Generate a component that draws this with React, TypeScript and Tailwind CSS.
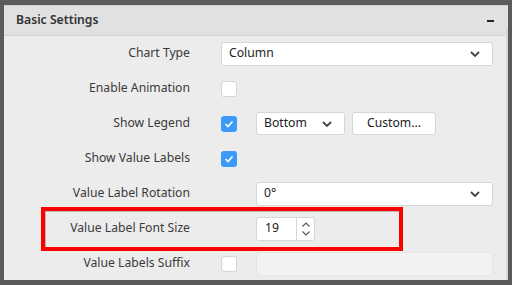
import React from "react";

const font = { fontFamily: '"Noto Sans", "Open Sans", sans-serif' };

function Chevron() {
  return (
    <svg width="10" height="6" viewBox="0 0 10 6" className="shrink-0">
      <polyline points="1,1 5,5 9,1" fill="none" stroke="#444" strokeWidth="1.8" />
    </svg>
  );
}

function Checkbox({ checked }: { checked?: boolean }) {
  if (checked) {
    return (
      <div className="flex h-4 w-4 shrink-0 items-center justify-center rounded-[3px] bg-[#3c9af8]">
        <svg width="10" height="8" viewBox="0 0 10 8">
          <polyline points="1.5,4 4,6.5 8.5,1.5" fill="none" stroke="#fff" strokeWidth="1.6" />
        </svg>
      </div>
    );
  }
  return <div className="h-4 w-4 shrink-0 rounded-[3px] border border-[#d4d4d4] bg-white" />;
}

function Select({ value, className }: { value: string; className: string }) {
  return (
    <div
      className={`flex items-center justify-between rounded-[3px] border border-[#d6d6d6] bg-white pl-[7px] pr-[12px] text-[12.2px] text-[#222] ${className}`}
    >
      <span>{value}</span>
      <Chevron />
    </div>
  );
}

function Row({ label, children }: { label: string; children?: React.ReactNode }) {
  return (
    <div className="flex h-[35px] shrink-0 items-center">
      <div className="w-[186px] shrink-0 text-right text-[12.2px] text-[#3a3a3a]">{label}</div>
      <div className="ml-[31px] flex items-center">{children}</div>
    </div>
  );
}

export default function App() {
  return (
    <div className="h-[285px] w-[512px] overflow-hidden bg-[#5b5b5b] pb-[5px] pl-[4px] pr-[4px] pt-[5px]" style={font}>
      <div className="relative flex h-full flex-col overflow-hidden border-t border-[#d2d2d2] bg-[#ececec]">
        <div className="flex h-[30px] shrink-0 items-center justify-between border-b border-[#d3d3d3] bg-[#e1e1e1] pl-[12px] pr-[14px]">
          <span className="text-[12.2px] font-semibold text-[#333]">Basic Settings</span>
          <div className="h-[2px] w-[7px] bg-[#222]" />
        </div>
        <div className="absolute right-0 top-[23px] bottom-0 w-[2px] bg-[#d6d6d6]" />

        <Row label="Chart Type">
          <Select value="Column" className="h-6 w-[272px]" />
        </Row>
        <Row label="Enable Animation">
          <Checkbox />
        </Row>
        <Row label="Show Legend">
          <Checkbox checked />
          <Select value="Bottom" className="ml-[19px] h-[23px] w-[89px]" />
          <div className="ml-[7px] flex h-[23px] w-[84px] items-center justify-center rounded-[3px] border border-[#d6d6d6] bg-white text-[12.2px] text-[#222]">
            Custom...
          </div>
        </Row>
        <Row label="Show Value Labels">
          <Checkbox checked />
        </Row>
        <Row label="Value Label Rotation">
          <Select value="0°" className="ml-[35px] h-6 w-[237px]" />
        </Row>
        <Row label="Value Label Font Size">
          <div className="ml-[35px] flex h-6 w-[59px] items-stretch rounded-[3px] border border-[#d6d6d6] bg-white text-[12.2px] text-[#222]">
            <div className="flex flex-1 items-center pl-[8px]">19</div>
            <div className="flex w-[18px] flex-col items-center justify-center gap-[4px] border-l border-[#d6d6d6]">
              <svg width="8" height="5" viewBox="0 0 8 5">
                <polyline points="0.5,4.5 4,1 7.5,4.5" fill="none" stroke="#555" strokeWidth="1.1" />
              </svg>
              <svg width="8" height="5" viewBox="0 0 8 5">
                <polyline points="0.5,0.5 4,4 7.5,0.5" fill="none" stroke="#555" strokeWidth="1.1" />
              </svg>
            </div>
          </div>
        </Row>
        <Row label="Value Labels Suffix">
          <Checkbox />
          <div className="ml-[19px] h-6 w-[237px] rounded-[3px] border border-[#e6e6e6] bg-[#f2f2f2]" />
        </Row>

        <div className="absolute left-[37px] top-[201px] h-[44px] w-[362px] border-[4px] border-[#ff0000]">
          <div className="h-full w-full border-l border-t border-[#b8b8b8]" />
        </div>
      </div>
    </div>
  );
}
